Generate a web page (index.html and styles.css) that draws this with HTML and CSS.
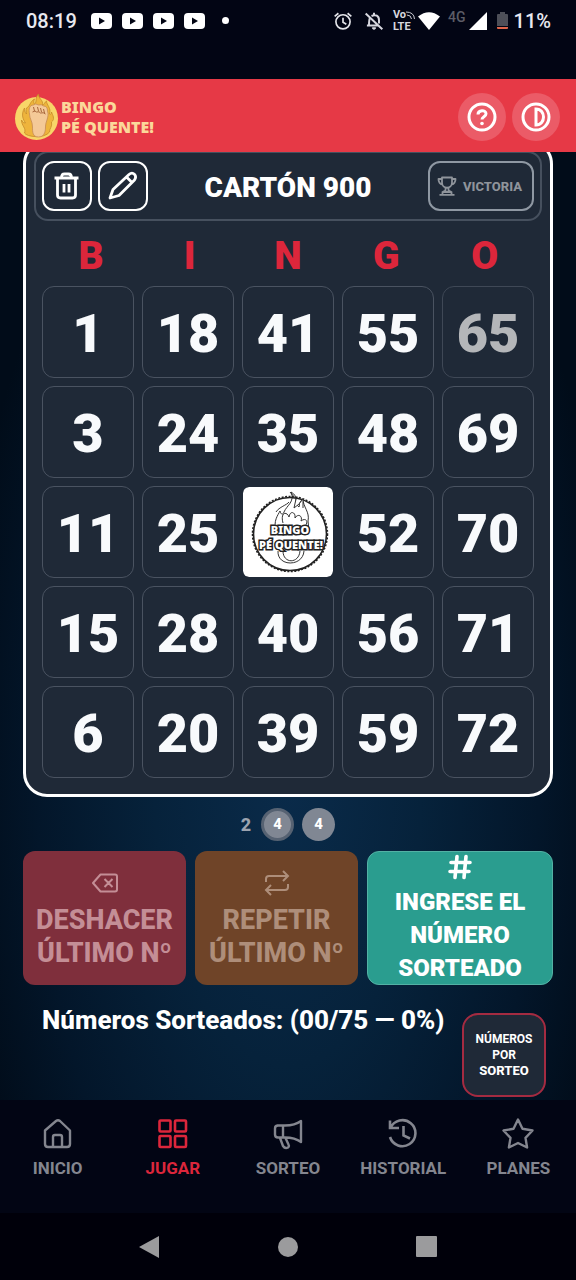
FILE: index.html
```html
<!DOCTYPE html>
<html lang="es">
<head>
<meta charset="utf-8">
<meta name="viewport" content="width=device-width, initial-scale=1">
<title>Bingo Pé Quente</title>
<link rel="stylesheet" href="styles.css">
</head>
<body>
<svg width="0" height="0" class="defs" aria-hidden="true">
  <defs>
    <symbol id="play" viewBox="0 0 21 16"><path fill="#fff" d="M4 0h13q4 0 4 4v8q0 4-4 4H4q-4 0-4-4V4q0-4 4-4z"/><path fill="#020514" d="M8 4.500v7l6-3.500z"/></symbol>
  </defs>
</svg>
<div class="screen">
  <div class="status">
    <span class="clock">08:19</span>
    <span class="plays">
      <svg class="play"><use href="#play"/></svg>
      <svg class="play"><use href="#play"/></svg>
      <svg class="play"><use href="#play"/></svg>
      <svg class="play"><use href="#play"/></svg>
    </span>
    <span class="dot"></span>
    <span class="status-right">
      <svg class="alarm" viewBox="0 0 24 24" fill="none" stroke="#e4e5ea" stroke-width="2"><circle cx="12" cy="13" r="8.500"/><path d="M12 8v5.500l4 2.400M2 6.500l4.500-3.800M22 6.500l-4.500-3.800"/></svg>
      <svg class="mute" viewBox="0 0 24 24" fill="none" stroke="#d6d7de" stroke-width="2.400"><path d="M2 3l20 19M7 8.500c-1 2-1 4-1 9H3.500h13M9 6c5-2.500 9 0 9 5v4M12 2v3"/><path d="M10 20h4a2 2 0 0 1-4 0z" fill="#d6d7de" stroke-width="1"/></svg>
      <span class="volte"><span class="vo">Vo<svg class="waves" viewBox="0 0 9 8" fill="none" stroke="#c9cad2" stroke-width="1"><path d="M0 1q8 0 8.500 7M1 4q4 0 4.500 4"/></svg></span><span>LTE</span></span>
      <svg class="wifi" viewBox="0 0 22 18"><path fill="#fff" d="M0 4.500Q11-4 22 4.500L11 18z"/></svg>
      <span class="net">4G</span>
      <svg class="signal" viewBox="0 0 18 18"><path fill="#fff" d="M18 0v18H0z"/></svg>
      <svg class="battery" viewBox="0 0 11 17"><path fill="#4d4f58" d="M1 2h2V0h5v2h2q1 0 1 1v11H0V3q0-1 1-1z"/><path fill="#e0664a" d="M0 15h11v1q0 1-1 1H1q-1 0-1-1z"/></svg>
      <span class="pct">11%</span>
    </span>
  </div>

  <header class="top">
    <a class="brand" href="#">
      <svg class="flame" viewBox="0 0 44 46">
        <circle cx="22" cy="24.500" r="21.500" fill="#f8d568"/>
        <path fill="#eeb43c" stroke="#c58a2a" stroke-width=".8" d="M10 39C12 43 30 45 35 38C35 34 38 33 37 28C41 25 38 21 37 18C37 20 36 21 35 20C37 14 32 11 32 7C30 8 30 11 28 11C29 6 24 5 24 0C20 4 23 8 20 10C19 9 19 7 20 5C15 8 16 12 12 14C11 16 12 18 12 20C10 18 10 16 10 14C6 21 9 26 11 29C8 29 8 27 7 26C7 32 12 34 10 39Z"/>
        <path fill="#f4c997" stroke="#c58a55" stroke-width=".8" d="M15 20C14 15 15 11 19 11Q21 9 24 11Q27 10 29 12Q33 12 33 17C35 23 31 27 31 33C31 39 29 43 24 43C18 43 18 38 18 33C18 27 15 25 15 20Z"/>
        <path fill="none" stroke="#a8663b" stroke-width="1" d="M19 13l1 4M23 13l1 4M26 14l1 4M29 15l1 4M18 18q3-2 4 0q3-1 4 1q3-1 5 1"/>
      </svg>
      <span class="brand-text"><span>BINGO</span><span>PÉ QUENTE!</span></span>
    </a>
    <div class="top-actions">
      <button class="round" aria-label="Ayuda"><svg viewBox="0 0 32 32" fill="none" stroke="#fff" stroke-width="3"><circle cx="16" cy="16" r="13"/><path d="M12 13.500c0-5 8-5 8-.7 0 3-4 3-4 5.700"/><circle cx="16" cy="22.500" r="1.800" fill="#fff" stroke="none"/></svg></button>
      <button class="round" aria-label="Contraste"><svg viewBox="0 0 32 32" fill="none" stroke="#fff" stroke-width="3"><circle cx="16" cy="16" r="13"/><path d="M16 8v16c10 0 10-16 0-16z"/></svg></button>
    </div>
  </header>

  <main class="main">
    <section class="card">
      <div class="card-head">
        <div class="tools">
          <button class="tool" aria-label="Eliminar"><svg viewBox="0 0 32 32" fill="none" stroke="#fff" stroke-width="2.800" stroke-linejoin="round"><path d="M3.500 8h24M6.500 8v17q0 3 3 3h12q3 0 3-3V8M10.500 8q0-4 3-4h4q3 0 3 4M13 14v8.500M18 14v8.500"/></svg></button>
          <button class="tool" aria-label="Editar"><svg viewBox="0 0 32 32" fill="none" stroke="#fff" stroke-width="2.800" stroke-linejoin="round"><path d="M3 28l3-8.500L22 4.500c4-3.500 8.500 1 5.500 5.500L12 25.500zM19.500 7l5.500 5.500"/></svg></button>
        </div>
        <h1 class="card-title">CARTÓN 900</h1>
        <button class="victory"><svg viewBox="0 0 20 20" fill="none" stroke="currentColor" stroke-width="1.800" stroke-linejoin="round"><path d="M5 1.500h10v5c0 7-10 7-10 0zM5 3H1.500c0 4 1.500 5 4 5.500M15 3h3.500c0 4-1.500 5-4 5.500M8.500 11.500v3L5.500 16v2.500M11.500 11.500v3l3 1.500v2.500M2.500 18.800h15M5.500 16h9"/></svg><span>VICTORIA</span></button>
      </div>
      <div class="letters"><span>B</span><span>I</span><span>N</span><span>G</span><span>O</span></div>
      <div class="grid">
        <button class="cell">1</button><button class="cell">18</button><button class="cell">41</button><button class="cell">55</button><button class="cell faded">65</button>
        <button class="cell">3</button><button class="cell">24</button><button class="cell">35</button><button class="cell">48</button><button class="cell">69</button>
        <button class="cell">11</button><button class="cell">25</button>
        <button class="cell free" aria-label="Bingo Pé Quente">
          <svg viewBox="0 0 90 90">
            <g fill="none" stroke="#333" stroke-width="1">
              <path d="M33 44C30 34 35 28 37 24C38 28 40 28 41 25C44 18 52 15 48 5C57 10 49 15 56 20C57 17 56 15 60 12C60 20 67 25 65 34L66 44M33 25C36 20 44 18 46 15M35 64C34 80 60 80 61 64M40 64C40 77 56 77 57 64M40 36C37 25 44 24 46 30C47 23 53 25 52 31C55 26 60 29 58 34C63 30 66 35 62 39"/>
            </g>
            <circle cx="47" cy="47" r="36.500" fill="none" stroke="#222" stroke-width="1.600"/>
            <circle cx="47" cy="47" r="37.500" fill="none" stroke="#222" stroke-width="1.500" stroke-dasharray="2 1.500"/>
            <path d="M47 5l6 7-2 9 5-4 4-5v9" fill="#fff" stroke="#333"/>
            <g class="free-text"><text x="47" y="47" text-anchor="middle">BINGO</text><text x="48" y="62" text-anchor="middle">PÉ QUENTE!</text></g>
          </svg>
        </button>
        <button class="cell">52</button><button class="cell">70</button>
        <button class="cell">15</button><button class="cell">28</button><button class="cell">40</button><button class="cell">56</button><button class="cell">71</button>
        <button class="cell">6</button><button class="cell">20</button><button class="cell">39</button><button class="cell">59</button><button class="cell">72</button>
      </div>
    </section>

    <div class="recent"><span class="count">2</span><span class="ball ring">4</span><span class="ball">4</span></div>

    <div class="actions">
      <button class="action undo"><svg viewBox="0 0 26 20" fill="none" stroke="currentColor" stroke-width="2" stroke-linejoin="round"><path d="M8.500 1.500H23q2 0 2 2v13q0 2-2 2H8.500L1 10zM12.500 6l8 8M20.500 6l-8 8"/></svg><span>DESHACER ÚLTIMO Nº</span></button>
      <button class="action repeat"><svg viewBox="0 0 26 26" fill="none" stroke="currentColor" stroke-width="2"><path d="M2 12V9q0-3 3-3h18M19 1l5 5-5 5M24 14v3q0 3-3 3H3M7 15l-5 5 5 5"/></svg><span>REPETIR ÚLTIMO Nº</span></button>
      <button class="action enter"><svg viewBox="0 0 24 26" fill="none" stroke="#fff" stroke-width="3.600" stroke-linecap="round"><path d="M9 2.500L7 23.500M18 2.500l-2 21M3 8.500h19M2 17.500h19"/></svg><span>INGRESE EL NÚMERO SORTEADO</span></button>
    </div>

    <div class="drawn">
      <h2 class="drawn-title">Números Sorteados: (00/75 — 0%)</h2>
      <button class="per-draw">NÚMEROS<br>POR<br><b>SORTEO</b></button>
    </div>
  </main>

  <nav class="tabs">
    <a class="tab" href="#"><svg viewBox="0 0 32 32" fill="none" stroke="currentColor" stroke-width="2.400" stroke-linejoin="round"><path d="M3 12.500L14 3q2-1.700 4 0l10 9.500v13.500q0 3-3 3H6q-3 0-3-3zM11 29V19q0-2 2-2h5q2 0 2 2v10"/></svg>INICIO</a>
    <a class="tab active" href="#"><svg viewBox="0 0 32 32" fill="none" stroke="currentColor" stroke-width="2.600"><rect x="2.500" y="2.500" width="11" height="11" rx="1"/><rect x="18" y="2.500" width="11" height="11" rx="1"/><rect x="2.500" y="18" width="11" height="11" rx="1"/><rect x="18" y="18" width="11" height="11" rx="1"/></svg>JUGAR</a>
    <a class="tab" href="#"><svg viewBox="0 0 32 32" fill="none" stroke="currentColor" stroke-width="2.400" stroke-linejoin="round"><path d="M5 7.500h8Q23 7.500 29 3v21Q23 19.500 13 19.500H6q-3 0-3-3v-6q0-3 3-3M11 8v11M8 20l3 8q2 3 5 1.500 1.500-1 .5-3L13.500 20"/></svg>SORTEO</a>
    <a class="tab" href="#"><svg viewBox="0 0 32 32" fill="none" stroke="currentColor" stroke-width="2.600"><path d="M3 2.500V10H12M3.500 10A13 13 0 1 1 3 19M16.500 8v9.500l6.500 3"/></svg>HISTORIAL</a>
    <a class="tab" href="#"><svg viewBox="0 0 32 32" fill="none" stroke="currentColor" stroke-width="2.400" stroke-linejoin="round"><path d="M16 1.500l4.500 9.300 10 1.700-7 7.400 1.600 9.600-9.100-4.500-9.100 4.500 1.600-9.600-7-7.400 10-1.700z"/></svg>PLANES</a>
  </nav>
  <div class="system">
    <svg viewBox="0 0 24 24"><path fill="#9b9b9d" d="M22 1v22L2 12z"/></svg>
    <svg viewBox="0 0 24 24"><circle cx="12" cy="12" r="10" fill="#9b9b9d"/></svg>
    <svg viewBox="0 0 24 24"><rect x="1" y="1" width="21" height="21" rx="1" fill="#9b9b9d"/></svg>
  </div>
</div>
</body>
</html>
```
FILE: styles.css
```css
* { box-sizing: border-box; }
body { margin: 0; background: #00000a; font-family: Roboto, "Liberation Sans", sans-serif; color: #fff; }
button { font-family: inherit; color: inherit; margin: 0; padding: 0; cursor: pointer; }
a { color: inherit; text-decoration: none; }
svg { display: block; flex: none; }
.defs { position: absolute; }
.screen { display: flex; flex-direction: column; min-height: 100vh; }

.status { display: flex; align-items: center; height: 79px; padding: 0 25px 38px 26px; background: #020514; font-size: 20px; font-weight: 500; color: #e8e9f0; }
.plays { display: flex; gap: 10px; margin-left: 14px; }
.play { width: 21px; height: 16px; }
.dot { width: 7px; height: 7px; margin-left: 17px; border-radius: 50%; background: #fff; }
.status-right { display: flex; align-items: center; margin-left: auto; }
.alarm, .mute { width: 20px; height: 20px; }
.mute { margin-left: 11px; }
.volte { display: flex; flex-direction: column; margin-left: 9px; font-size: 11px; line-height: 12px; font-weight: 700; color: #d6d7de; }
.vo { display: flex; align-items: center; }
.waves { width: 9px; height: 8px; }
.wifi { width: 22px; height: 18px; margin-left: 3px; }
.net { margin-left: 8px; font-size: 14px; line-height: 24px; padding-bottom: 8px; color: #5b5c66; }
.signal { width: 18px; height: 18px; margin-left: 3px; }
.battery { width: 11px; height: 17px; margin-left: 10px; }
.pct { margin-left: 6px; }

.top { display: flex; align-items: center; justify-content: space-between; height: 73px; padding: 3px 16px 0 14px; background: #e63946; }
.brand { display: flex; align-items: center; gap: 2px; }
.flame { width: 45px; height: 46px; }
.brand-text { display: flex; flex-direction: column; gap: 1px; font-family: "Noto Sans", sans-serif; font-size: 16px; line-height: 19px; font-weight: 900; color: #fbd89a; }
.top-actions { display: flex; gap: 6px; }
.round { display: grid; place-items: center; width: 48px; height: 48px; border: 0; border-radius: 50%; background: #eb5b67; }
.round svg { width: 32px; height: 32px; }

.main { flex: 1; overflow: hidden; padding: 0 23px; background: radial-gradient(ellipse 58% 76% at 50% 66%, #0a2b4a 0%, #06223b 40%, #03162a 75%, #010c19 100%); }
.card { margin-top: -12px; padding: 8px 16px 16px; border: 3px solid #fff; border-radius: 24px; background: #1f2937; }
.card-head { display: flex; align-items: center; justify-content: space-between; height: 70px; margin: 0 -8px; padding: 0 6px; border: 2px solid #46505e; border-radius: 14px; }
.tools { display: flex; gap: 6px; }
.tool { display: grid; place-items: center; width: 50px; height: 50px; border: 2px solid #fff; border-radius: 12px; background: none; }
.tool svg { width: 32px; height: 32px; }
.card-title { margin: 0; padding-top: 3px; font-size: 28px; line-height: 32px; font-weight: 900; }
.victory { display: flex; align-items: center; justify-content: center; gap: 6px; width: 106px; height: 50px; padding-right: 3px; border: 2px solid #8f98a3; border-radius: 12px; background: none; color: #8f949b; font-size: 13px; font-weight: 800; }
.victory svg { width: 20px; height: 20px; }
.letters { display: grid; grid-template-columns: repeat(5, 1fr); height: 65px; padding-top: 11px; font-size: 39px; line-height: 48px; font-weight: 900; text-align: center; color: #dc263b; }
.grid { display: grid; grid-template-columns: repeat(5, 1fr); gap: 8px; }
.cell { display: grid; place-items: center; aspect-ratio: 1; padding-top: 4px; border: 1px solid #4a5361; border-radius: 12px; background: #1f2937; color: #f8fafc; font-size: 54px; line-height: 64px; font-weight: 900; }
.faded { color: #b4b6b9; border-color: #3f4856; }
.free { overflow: hidden; padding: 0; border: 1px solid #1f2937; border-radius: 7px; background: #fff; background-clip: padding-box; }
.free svg { width: 100%; height: 100%; }
.free-text { font-family: "Noto Sans", sans-serif; font-size: 11px; line-height: 12px; font-weight: 900; fill: #fff; stroke: #222; stroke-width: 3px; paint-order: stroke; }

.recent { display: flex; align-items: center; justify-content: center; gap: 8px; height: 54px; font-weight: 800; }
.count { margin-right: 2px; font-size: 18px; color: #9ca3af; }
.ball { display: grid; place-items: center; width: 33px; height: 33px; border-radius: 50%; background: #808793; font-size: 15px; }
.ring { border: 3px solid #566272; }

.actions { display: grid; grid-template-columns: 163fr 163fr 186fr; gap: 9px; }
.action { display: flex; flex-direction: column; align-items: center; justify-content: center; height: 134px; padding: 3px 8px 0; border: 0; border-radius: 12px; font-size: 27px; line-height: 33px; font-weight: 800; }
.action svg { width: 26px; height: 26px; margin-bottom: 8px; }
.undo { background: #7f2f3c; color: #c48e96; }
.repeat { background: #6f4428; color: #ae8e7a; }
.enter { padding: 2px 20px 0; border: 1px solid #53b1a4; background: #2a9d8f; font-size: 24px; font-weight: 900; }
.enter svg { margin-bottom: 6px; }

.drawn { display: flex; align-items: flex-start; justify-content: space-between; padding: 17px 7px 2px 19px; }
.drawn-title { margin: 0; padding-top: 1px; font-size: 26px; line-height: 34px; font-weight: 800; white-space: nowrap; }
.per-draw { flex: none; width: 84px; height: 84px; margin-top: 11px; border: 2px solid #a42b41; border-radius: 16px; background: #1f2937; font-size: 12px; line-height: 16px; font-weight: 700; }
.per-draw b { font-size: 13px; font-weight: 800; }

.tabs { display: grid; grid-template-columns: repeat(5, 1fr); height: 113px; background: #020514; }
.tab { display: flex; flex-direction: column; align-items: center; gap: 8px; padding-top: 18px; font-size: 17px; line-height: 20px; font-weight: 700; color: #84868f; }
.tab svg { width: 32px; height: 32px; }
.tab.active { color: #dc263b; }
.system { display: flex; align-items: center; justify-content: center; gap: 115px; height: 67px; background: #00000a; }
.system svg { width: 24px; height: 24px; }
```
